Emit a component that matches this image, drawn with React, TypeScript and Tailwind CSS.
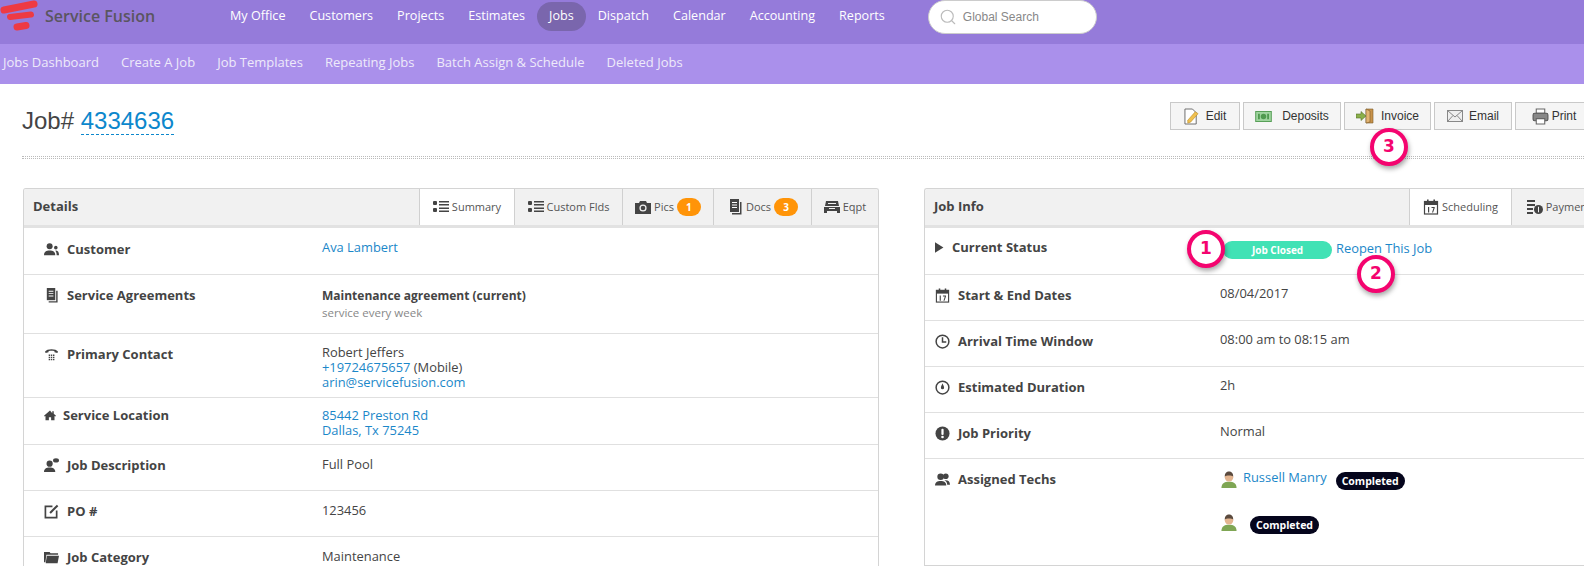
import { Search } from 'lucide-react'

const mainNav = ['My Office', 'Customers', 'Projects', 'Estimates']
const mainNavAfter = ['Dispatch', 'Calendar', 'Accounting', 'Reports']
const subNav = ['Jobs Dashboard', 'Create A Job', 'Job Templates', 'Repeating Jobs', 'Batch Assign & Schedule', 'Deleted Jobs']

function Logo() {
  return (
    <svg viewBox="0 0 40 34" className="w-[40px] h-[34px] shrink-0">
      <g stroke="#ee3a43" strokeLinecap="round" fill="none">
        <path d="M4 10 L34 4" strokeWidth="7" />
        <path d="M10 17 L31 14.500" strokeWidth="6" />
        <path d="M17 27 L26 25.500" strokeWidth="7" />
      </g>
    </svg>
  )
}

function Callout({ n, className }: { n: number; className: string }) {
  return (
    <div
      className={`absolute w-[38px] h-[38px] rounded-full bg-white border-[4px] border-[#f4046f] shadow-[1px_3px_5px_rgba(0,0,0,0.35)] flex items-center justify-center text-[#f4046f] text-[17px] font-bold [font-family:DejaVu_Sans,sans-serif] ${className}`}
    >
      {n}
    </div>
  )
}

function Glyph({ name, className = 'w-[15px] h-[15px]' }: { name: string; className?: string }) {
  const c = '#444'
  const shapes: Record<string, React.ReactNode> = {
    list: (
      <g fill={c}>
        <rect x="0" y="2" width="4" height="4" rx="1" />
        <rect x="0" y="9" width="4" height="4" rx="1" />
        <path d="M6 2h10v1.400H6zM6 5h10v1.400H6zM6 8.600h10V10H6zM6 11.600h10V13H6z" />
      </g>
    ),
    camera: (
      <g>
        <path d="M0 4h4l1-2h6l1 2h4v11H0z" fill={c} />
        <circle cx="8" cy="9" r="3.600" fill="#f1f1f1" />
        <circle cx="8" cy="9" r="2.300" fill={c} />
      </g>
    ),
    doc: (
      <g>
        <path d="M3 0h9v13H3z" fill={c} />
        <path d="M5 3h5v1H5zM5 5.500h5v1H5zM5 8h5v1H5z" fill="#fff" />
        <path d="M13 3h1.500v12.500H5V14h8z" fill={c} />
      </g>
    ),
    eqpt: (
      <g fill={c}>
        <path d="M2 2h12l1 5H1z" />
        <path d="M0 8h16v6h-3v-2H3v2H0z" />
        <path d="M4 4h8v1H4zM5 9h6v1H5z" fill="#f1f1f1" />
      </g>
    ),
    users: (
      <g fill={c}>
        <circle cx="6" cy="4.500" r="3.200" />
        <path d="M0 14c0-3.600 2.400-5 6-5s6 1.400 6 5z" />
        <circle cx="12.600" cy="6" r="1.900" />
        <path d="M13 9c2 .2 3 1.700 3 5h-2.500c0-2-.5-3.700-1.500-4.600z" />
      </g>
    ),
    phone: (
      <g fill={c}>
        <path d="M1 5c2-3.500 12-3.500 14 0l-.8 1.500-3-.8V4.500c-1.800-.6-4.600-.6-6.400 0v1.200l-3 .8z" />
        <path d="M5 8h1.500v1.500H5zM7.300 8h1.500v1.500H7.300zM9.600 8h1.500v1.500H9.600zM5 10.300h1.500v1.500H5zM7.300 10.300h1.500v1.500H7.300zM9.600 10.300h1.500v1.500H9.600zM5 12.600h1.500v1.500H5zM7.300 12.600h1.500v1.500H7.300zM9.600 12.600h1.500v1.500H9.600z" />
      </g>
    ),
    home: <path d="M8 2 0 9l1 1 1-.8V15h4.500v-4h3v4H14V9.200l1 .8 1-1-3-2.600V3h-2v2.600z" fill={c} />,
    speech: (
      <g fill={c}>
        <circle cx="6" cy="6" r="3.300" />
        <path d="M0 15c0-3.500 2.400-4.800 6-4.800s6 1.300 6 4.800z" />
        <ellipse cx="12.800" cy="2.600" rx="3.200" ry="2.300" />
      </g>
    ),
    edit: (
      <g fill="none" stroke={c} strokeWidth="1.800">
        <path d="M9 2.500H1.500v12h12V7" />
        <path d="M6.500 9.500 14.500 1.500" strokeWidth="2.200" />
      </g>
    ),
    folder: (
      <g fill={c}>
        <path d="M0 2h6l1 1.500h8V5H2.500L1.500 13H0z" />
        <path d="M3 6h13l-1.500 8H1.800z" />
      </g>
    ),
    calendar: (
      <g>
        <rect x="1.500" y="2.500" width="13" height="12.500" fill="none" stroke={c} strokeWidth="1.200" />
        <rect x="1.500" y="2.500" width="13" height="3.500" fill={c} />
        <rect x="4" y="0.500" width="1.600" height="3.500" fill={c} />
        <rect x="10.400" y="0.500" width="1.600" height="3.500" fill={c} />
        <path d="M5 8h1.200v5.500H5zM8.500 8h3.200v1l-1.600 4.500H9l1.500-4.500H8.500z" fill={c} />
      </g>
    ),
    clock: (
      <g fill="none" stroke={c}>
        <circle cx="8" cy="8" r="6.800" strokeWidth="1.600" />
        <path d="M8 3.500V8.500H12" strokeWidth="1.600" />
      </g>
    ),
    duration: (
      <g>
        <circle cx="8" cy="8" r="6.800" fill="none" stroke={c} strokeWidth="1.600" />
        <path d="M8 3.500c.9 2.400 1.700 3.400 1.700 4.700a1.700 1.700 0 0 1-3.400 0C6.300 6.900 7.100 5.900 8 3.500z" fill={c} />
      </g>
    ),
    alert: (
      <g>
        <circle cx="8" cy="8" r="7.500" fill={c} />
        <rect x="6.800" y="3" width="2.400" height="6.500" rx="1" fill="#fff" />
        <circle cx="8" cy="11.700" r="1.400" fill="#fff" />
      </g>
    ),
    techs: (
      <g fill={c}>
        <circle cx="6" cy="5" r="3.500" />
        <path d="M0 14.500c0-3.800 2.400-5 6-5s6 1.200 6 5z" />
        <circle cx="11.500" cy="4.500" r="3" />
        <path d="M10 8.900c3.600-.5 6 1 6 4.600h-3c0-2-1-3.500-3-4.600z" />
      </g>
    ),
    coins: (
      <g fill={c}>
        <path d="M0 1h8v2H0zM0 5h8v2H0zM0 9h6v2H0zM0 13h6v2H0z" />
        <circle cx="11.500" cy="10.500" r="4.500" />
        <path d="M11 7.800h1v5.400h-1z" fill="#f1f1f1" />
      </g>
    ),
    play: <path d="M0 2.500 9 8l-9 5.500z" fill={c} />,
  }
  return (
    <svg viewBox="0 0 16 16" className={`shrink-0 ${className}`}>
      {shapes[name]}
    </svg>
  )
}

function ToolButton({ w, icon, label, gap }: { w: string; icon: React.ReactNode; label: string; gap: string }) {
  return (
    <button className={`h-[28px] ${w} ${gap} shrink-0 flex items-center justify-center border border-[#c9c9c9] bg-[#f5f5f5] text-[12px] text-[#333] [font-family:Liberation_Sans,sans-serif]`}>
      {icon}
      {label}
    </button>
  )
}

function Tab({ w, active, icon, label, badge }: { w: string; active?: boolean; icon: string; label: string; badge?: number }) {
  return (
    <div className={`${w} shrink-0 border-l border-[#d0d0d0] flex items-center justify-center gap-[3px] text-[11px] text-[#555] ${active ? 'bg-white' : ''}`}>
      <Glyph name={icon} className="w-[16px] h-[16px]" />
      <span>{label}</span>
      {badge && (
        <span className="w-[24px] h-[18px] rounded-full bg-[#ff9408] text-white text-[10px] font-bold flex items-center justify-center">{badge}</span>
      )}
    </div>
  )
}

function Row({
  h,
  col,
  icon,
  iconClass,
  label,
  pad = 'pl-[20px]',
  pt = 'pt-[10px]',
  valuePt = 'pt-[2px]',
  gap = 'gap-[8px]',
  border = 'border-b',
  children,
}: {
  h: string
  col: string
  icon: string
  iconClass?: string
  label: string
  pad?: string
  pt?: string
  valuePt?: string
  gap?: string
  border?: string
  children?: React.ReactNode
}) {
  return (
    <div className={`${h} ${pt} ${border} shrink-0 border-[#e0e0e0] flex items-start`}>
      <div className={`${col} ${pad} ${gap} shrink-0 flex items-center mt-[1px] text-[13px] font-bold text-[#444] leading-[18px]`}>
        <Glyph name={icon} className={iconClass} />
        {label}
      </div>
      <div className={`${valuePt} text-[12.900px] text-[#444] leading-[15px] flex-1`}>{children}</div>
    </div>
  )
}

function TechAvatar() {
  return (
    <svg viewBox="0 0 16 18" className="w-[16px] h-[17px] shrink-0">
      <path d="M0 18c0-4.500 3-6.500 8-6.500s8 2 8 6.500z" fill="#7fa654" />
      <circle cx="8" cy="6.500" r="4.500" fill="#e3b590" />
      <path d="M3.500 6C3.500 2 5.500.5 8 .5s4.500 1.500 4.500 5.500C11 4.500 5 4.500 3.500 6z" fill="#5b4a3e" />
    </svg>
  )
}

function Badge({ className }: { className: string }) {
  return (
    <span className={`h-[18px] w-[69px] rounded-full bg-[#05051c] text-white text-[10.500px] font-bold flex items-center justify-center ${className}`}>
      Completed
    </span>
  )
}

export default function App() {
  return (
    <div className="relative w-[1584px] h-[566px] overflow-hidden bg-white [font-family:Open_Sans,sans-serif]">
      {/* Main nav */}
      <header className="h-[44px] bg-[#957bda] flex items-start">
        <Logo />
        <span className="ml-[5px] mt-[3px] w-[185px] text-[16px] font-semibold text-[#5a5560] leading-[26px]">Service Fusion</span>
        <nav className="flex items-center gap-[24px] h-[32px] text-[12.600px] text-white">
          {mainNav.map((label) => (
            <span key={label}>{label}</span>
          ))}
          <span className="-mx-[12px] px-[12px] h-[29px] rounded-full bg-[#7a66ad] flex items-center">Jobs</span>
          {mainNavAfter.map((label) => (
            <span key={label}>{label}</span>
          ))}
        </nav>
        <div className="ml-[43px] w-[169px] h-[34px] rounded-full bg-white border border-[#ccc] flex items-center pl-[10px] gap-[6px] text-[12px] text-[#888] [font-family:Liberation_Sans,sans-serif]">
          <Search className="w-[18px] h-[18px] text-[#bbb]" strokeWidth={1.5} />
          Global Search
        </div>
      </header>

      {/* Sub nav */}
      <nav className="h-[40px] pb-[2px] bg-[#aa90eb] flex items-center gap-[22px] pl-[3px] text-[13px] text-[#eeeafa]">
        {subNav.map((label) => (
          <span key={label}>{label}</span>
        ))}
      </nav>

      {/* Title row */}
      <div className="h-[104px] relative pl-[22px] pt-[18px]">
        <div className="flex items-start justify-between">
          <h1 className="mt-[1px] text-[24px] leading-[36px] [font-family:Liberation_Sans,sans-serif] text-[#444] font-normal">
            Job# <span className="text-[#0c87cc] border-b border-dashed border-[#0c87cc]">4334636</span>
          </h1>
          <div className="flex -mr-[9px] gap-[3px]">
            <ToolButton w="w-[70px]" gap="gap-[7px]" label="Edit" icon={<svg viewBox="0 0 16 18" className="w-[15px] h-[17px]"><path d="M1 1h8l4 4v12H1z" fill="#fff" stroke="#666" /><path d="M4 13 12 4l3 2-8 9-3 1z" fill="#f0c050" stroke="#b88a20" strokeWidth=".6" /></svg>} />
            <ToolButton w="w-[98px]" gap="gap-[10px]" label="Deposits" icon={<svg viewBox="0 0 18 12" className="w-[17px] h-[11px]"><rect x=".5" y=".5" width="17" height="11" fill="#9fd49f" stroke="#4f9a4f" /><circle cx="9" cy="6" r="3" fill="#4f9a4f" /><path d="M3 3h2v6H3zM13 3h2v6h-2z" fill="#4f9a4f" /></svg>} />
            <ToolButton w="w-[87px]" gap="gap-[7px]" label="Invoice" icon={<svg viewBox="0 0 18 16" className="w-[18px] h-[16px]"><path d="M10 1h7v14h-7z" fill="#c8924a" stroke="#7a5a2a" strokeWidth=".6" /><path d="M10 1 14 3v11l-4 1z" fill="#e3b573" stroke="#7a5a2a" strokeWidth=".6" /><path d="M0 6h5V3.500L10 8l-5 4.500V10H0z" fill="#8ab04a" stroke="#55702a" strokeWidth=".6" /></svg>} />
            <ToolButton w="w-[78px]" gap="gap-[6px]" label="Email" icon={<svg viewBox="0 0 16 12" className="w-[16px] h-[12px]"><rect x=".5" y=".5" width="15" height="11" fill="#efefef" stroke="#888" /><path d="M.5.500 8 7l7.500-6.500M.5 11.500 6 5.500M15.500 11.500 10 5.500" fill="none" stroke="#888" /></svg>} />
            <ToolButton w="w-[78px]" gap="gap-[3px]" label="Print" icon={<svg viewBox="0 0 16 16" className="w-[17px] h-[17px]"><path d="M4 1h8v4H4z" fill="#fff" stroke="#666" /><rect x="1" y="5" width="14" height="7" rx="1.500" fill="#888" stroke="#555" /><path d="M4 10h8v5H4z" fill="#fff" stroke="#666" /></svg>} />
          </div>
        </div>
        <div className="absolute left-[22px] right-0 top-[72px] h-[3px] border-y border-dotted border-[#bbb]" />
      </div>

      {/* Panels */}
      <div className="flex items-start pl-[23px]">
        <section className="w-[856px] h-[378px] shrink-0 border-x border-t border-[#d4d4d4] rounded-t-[3px] overflow-hidden flex flex-col">
          <div className="h-[39px] shrink-0 bg-[#f1f1f1] border-b-[3px] border-[#e2e2e2] flex items-stretch">
            <span className="pl-[9px] w-[395px] shrink-0 self-center text-[13px] font-bold text-[#444]">Details</span>
            <Tab w="w-[95px]" active icon="list" label="Summary" />
            <Tab w="w-[108px]" icon="list" label="Custom Flds" />
            <Tab w="w-[91px]" icon="camera" label="Pics" badge={1} />
            <Tab w="w-[98px]" icon="doc" label="Docs" badge={3} />
            <Tab w="w-[67px]" icon="eqpt" label="Eqpt" />
          </div>
          <Row h="h-[47px]" col="w-[298px]" pt="pt-[11px]" valuePt="pt-[1px]" icon="users" label="Customer">
            <a className="text-[#1b87c9]">Ava Lambert</a>
          </Row>
          <Row h="h-[59px]" col="w-[298px]" icon="doc" label="Service Agreements">
            <div className="font-bold leading-[17px] text-[12px]">Maintenance agreement (current)</div>
            <div className="text-[11.500px] text-[#888] leading-[17px]">service every week</div>
          </Row>
          <Row h="h-[64px]" col="w-[298px]" valuePt="pt-[1px]" icon="phone" label="Primary Contact">
            <div>Robert Jeffers</div>
            <div><a className="text-[#1b87c9]">+19724675657</a> (Mobile)</div>
            <div><a className="text-[#1b87c9]">arin@servicefusion.com</a></div>
          </Row>
          <Row h="h-[47px]" col="w-[298px]" pt="pt-[7px]" valuePt="pt-[3px]" gap="gap-[7px]" icon="home" iconClass="w-[12px] h-[12px]" label="Service Location">
            <a className="block text-[#1b87c9]">85442 Preston Rd</a>
            <a className="block text-[#1b87c9]">Dallas, Tx 75245</a>
          </Row>
          <Row h="h-[46px]" col="w-[298px]" icon="speech" label="Job Description">Full Pool</Row>
          <Row h="h-[46px]" col="w-[298px]" icon="edit" label="PO #">123456</Row>
          <Row h="h-[46px]" col="w-[298px]" icon="folder" label="Job Category">Maintenance</Row>
        </section>

        <section className="ml-[45px] w-[700px] h-[378px] shrink-0 border-l border-t border-b border-[#d4d4d4] rounded-tl-[3px] overflow-hidden flex flex-col">
          <div className="h-[39px] shrink-0 bg-[#f1f1f1] border-b-[3px] border-[#e2e2e2] flex items-stretch">
            <span className="pl-[9px] w-[484px] shrink-0 self-center text-[13px] font-bold text-[#444]">Job Info</span>
            <Tab w="w-[102px]" active icon="calendar" label="Scheduling" />
            <Tab w="w-[100px]" icon="coins" label="Payments" />
          </div>
          <Row h="h-[47px]" col="w-[295px]" pad="pl-[10px]" pt="pt-[9px]" valuePt="pt-[1px]" icon="play" iconClass="w-[15px] h-[15px] -mr-[6px]" label="Current Status">
            <div className="flex items-center ml-[3px] mt-[3px]">
              <span className="w-[109px] h-[18px] rounded-full bg-[#41e2b5] text-white text-[10px] font-bold flex items-center justify-center">Job Closed</span>
              <a className="ml-[4px] -mt-[4px] text-[#1b87c9]">Reopen This Job</a>
            </div>
          </Row>
          <Row h="h-[46px]" col="w-[295px]" pad="pl-[10px]" valuePt="pt-[1px]" icon="calendar" label="Start & End Dates">08/04/2017</Row>
          <Row h="h-[46px]" col="w-[295px]" pad="pl-[10px]" valuePt="pt-[1px]" icon="clock" label="Arrival Time Window">08:00 am to 08:15 am</Row>
          <Row h="h-[46px]" col="w-[295px]" pad="pl-[10px]" valuePt="pt-[1px]" icon="duration" label="Estimated Duration">2h</Row>
          <Row h="h-[46px]" col="w-[295px]" pad="pl-[10px]" valuePt="pt-[1px]" icon="alert" label="Job Priority">Normal</Row>
          <Row h="h-[106px]" col="w-[295px]" pad="pl-[10px]" valuePt="pt-[1px]" border="" icon="techs" label="Assigned Techs">
            <div className="flex items-start ml-[1px] mt-[1px]">
              <TechAvatar />
              <a className="ml-[6px] -mt-[1px] text-[#1b87c9]">Russell Manry</a>
              <Badge className="ml-[9px] mt-[1px]" />
            </div>
            <div className="flex items-start ml-[1px] mt-[24px]">
              <TechAvatar />
              <Badge className="ml-[13px] mt-[2px]" />
            </div>
          </Row>
        </section>
      </div>

      <Callout n={1} className="left-[1187px] top-[230px]" />
      <Callout n={2} className="left-[1357px] top-[255px]" />
      <Callout n={3} className="left-[1370px] top-[128px]" />
    </div>
  )
}
